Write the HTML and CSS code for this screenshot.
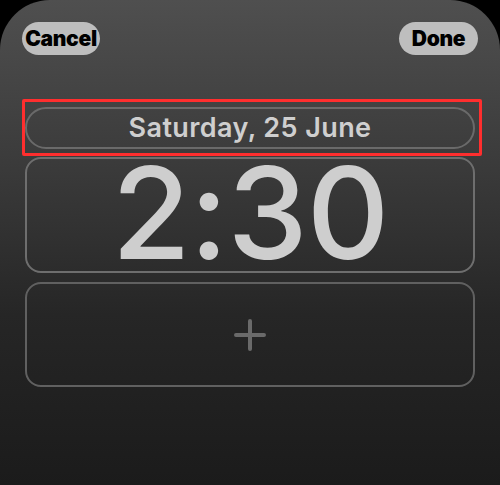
FILE: index.html
```html
<!DOCTYPE html>
<html>
<head>
<meta charset="utf-8">
<link rel="stylesheet" href="styles.css">
</head>
<body>
<div class="screen">
  <div class="header">
    <div class="pill-btn cancel">Cancel</div>
    <div class="pill-btn done">Done</div>
  </div>
  <div class="widgets">
    <div class="date-pill">Saturday, 25 June</div>
    <div class="time-box"><span class="time">2:30</span></div>
    <div class="add-box">
      <svg class="plus" width="32" height="32" viewBox="0 0 32 32">
        <path d="M16 2 V30 M2 16 H30" stroke="#6a6a6a" stroke-width="4" stroke-linecap="round" fill="none"/>
      </svg>
    </div>
  </div>
  <div class="highlight"></div>
</div>
</body>
</html>
```
FILE: styles.css
```css
html, body {
  margin: 0;
  padding: 0;
  background: #000;
}
.screen {
  position: relative;
  width: 500px;
  height: 485px;
  border-radius: 50px 50px 0 0;
  background: linear-gradient(180deg, #4f4f4f 0%, #3a3a3a 35%, #262626 65%, #1b1b1b 100%);
  overflow: hidden;
  font-family: Inter, "Liberation Sans", sans-serif;
}
.header {
  display: flex;
  justify-content: space-between;
  padding: 22px 22px 0 22px;
}
.pill-btn {
  height: 33px;
  border-radius: 17px;
  background: #bebebe;
  color: #000;
  font-weight: 900;
  font-size: 21px;
  display: flex;
  align-items: center;
  justify-content: center;
  letter-spacing: -0.3px;
}
.cancel { width: 78px; }
.done { width: 79px; }
.widgets {
  display: flex;
  flex-direction: column;
  padding: 0 25px;
  margin-top: 52px;
}
.date-pill {
  height: 42px;
  box-sizing: border-box;
  border: 2.5px solid #6a6a6a;
  border-radius: 21px;
  display: flex;
  align-items: center;
  justify-content: center;
  color: #cfcfcf;
  font-weight: 600;
  font-size: 27px;
  line-height: 32px;
  letter-spacing: 0.4px;
}
.time-box {
  margin-top: 8px;
  height: 116px;
  box-sizing: border-box;
  border: 2.5px solid #6e6e6e;
  border-radius: 16px;
  display: flex;
  align-items: center;
  justify-content: center;
}
.time {
  color: #cecece;
  font-weight: 500;
  font-size: 128px;
  line-height: 104px;
  letter-spacing: -1px;
  margin-bottom: 4px;
}
.add-box {
  margin-top: 9px;
  height: 105px;
  box-sizing: border-box;
  border: 2.5px solid #606060;
  border-radius: 16px;
  display: flex;
  align-items: center;
  justify-content: center;
}
.plus { display: block; }
.highlight {
  position: absolute;
  left: 22px;
  top: 99px;
  width: 460px;
  height: 57px;
  box-sizing: border-box;
  border: 3px solid #ff2e2e;
  border-radius: 2px;
}
```
